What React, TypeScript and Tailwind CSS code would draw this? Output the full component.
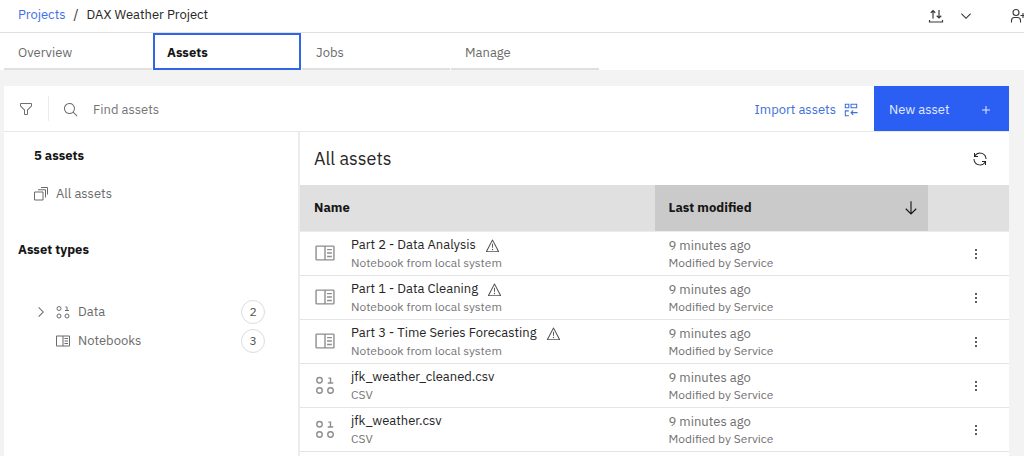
import type { ReactNode } from 'react';

const assets = [
  { name: 'Part 2 - Data Analysis', kind: 'Notebook from local system', notebook: true },
  { name: 'Part 1 - Data Cleaning', kind: 'Notebook from local system', notebook: true },
  { name: 'Part 3 - Time Series Forecasting', kind: 'Notebook from local system', notebook: true },
  { name: 'jfk_weather_cleaned.csv', kind: 'CSV', notebook: false },
  { name: 'jfk_weather.csv', kind: 'CSV', notebook: false },
];

const tabs = ['Overview', 'Assets', 'Jobs', 'Manage'];

export default function App() {
  return (
    <div className="flex min-h-screen flex-col overflow-hidden bg-[#f3f3f3] font-['IBM_Plex_Sans','Noto_Sans',sans-serif] text-[13px] leading-5 text-[#262626]">
      <header className="flex h-[33px] items-center justify-between border-b border-[#e0e0e0] bg-white pl-[18px]">
        <nav aria-label="Breadcrumb" className="flex items-center gap-2 pb-0.5">
          <a href="#projects" className="text-[#3d70e8]">Projects</a>
          <span>/</span>
          <span>DAX Weather Project</span>
        </nav>
        <div className="-mr-0.5 flex shrink-0 items-center text-[#393939]">
          <button aria-label="Import or export" className="mr-[14px]"><Icon className="size-4"><Transfer /></Icon></button>
          <button aria-label="More actions" className="mr-9"><Icon className="size-4"><path d="M16 22 6 12l1.4-1.4 8.6 8.6 8.6-8.6L26 12z" /></Icon></button>
          <button aria-label="Add collaborators"><Icon className="size-4"><UserAdd /></Icon></button>
        </div>
      </header>

      <nav aria-label="Project" className="flex gap-px bg-white pl-1">
        {tabs.map((tab) => (
          <a
            key={tab}
            href={`#${tab.toLowerCase()}`}
            className={`flex h-[37px] w-37 items-center ${tab === 'Assets' ? 'border-2 border-[#2f66e6] px-3 pt-0.5 font-bold text-[#161616]' : 'border-b-2 border-[#e0e0e0] px-[14px] pt-1 text-[#6b6b6b]'}`}
          >
            {tab}
          </a>
        ))}
      </nav>

      <main className="mt-4 mr-[15px] ml-1 flex grow flex-col bg-white">
        <div className="flex h-[46px] border-b border-[#e8e8e8]">
          <button aria-label="Filter" className="px-[14px] text-[#6f6f6f]"><Icon className="size-4"><Filter /></Icon></button>
          <div className="my-2.5 border-l border-[#ececec]" />
          <label className="flex grow items-center gap-[14px] pt-0.5 pl-[14px] text-[#6f6f6f]">
            <Icon className="size-4">
              <path d="m29 27.6-7.6-7.6a11 11 0 1 0-1.4 1.4l7.6 7.6zM4 13a9 9 0 1 1 9 9 9 9 0 0 1-9-9z" />
            </Icon>
            <input type="text" aria-label="Find assets" placeholder="Find assets" className="min-w-0 grow outline-none placeholder:text-[#757575]" />
          </label>
          <button className="flex items-center gap-2 px-4 pt-0.5 text-[#3d70d8]">
            Import assets
            <Icon className="size-[14px]"><ImportAssets /></Icon>
          </button>
          <button className="flex w-[135px] items-center justify-between bg-[#2b5ff3] pt-0.5 pr-[15px] pl-[15px] text-[#e3eaff]">
            New asset
            <Icon className="size-4"><path d="M17 15V8h-2v7H8v2h7v7h2v-7h7v-2z" /></Icon>
          </button>
        </div>

        <div className="flex grow">
          <aside className="w-[296px] shrink-0 border-r-2 border-[#ececec] text-[#6b6b6b]">
            <h2 className="mt-[14px] ml-[30px] font-bold text-[#161616]">5 assets</h2>
            <a href="#all" className="mt-[18px] ml-[29px] flex items-center gap-[7px]">
              <Icon className="size-4"><Stack /></Icon>
              All assets
            </a>
            <h2 className="mt-9 ml-[14px] font-bold text-[#161616]">Asset types</h2>
            <ul className="mt-[37px] mr-[33px] ml-[29px]">
              <li className="flex h-[29px] items-center">
                <button aria-label="Expand data" className="w-[22px]">
                  <Icon className="size-4"><path d="M22 16 12 26l-1.4-1.4 8.6-8.6-8.6-8.6L12 6z" /></Icon>
                </button>
                <Icon className="size-4"><Data /></Icon>
                <a href="#data" className="ml-[7px] grow">Data</a>
                <Count value={2} />
              </li>
              <li className="flex h-[29px] items-center pl-[22px]">
                <Icon className="size-4"><Notebook /></Icon>
                <a href="#notebooks" className="ml-[7px] grow">Notebooks</a>
                <Count value={3} />
              </li>
            </ul>
          </aside>

          <section className="min-w-0 grow">
            <div className="flex h-[53px] items-center justify-between pr-[21px] pl-[14px]">
              <h1 className="text-lg">All assets</h1>
              <button aria-label="Refresh"><Icon className="size-4"><Renew /></Icon></button>
            </div>
            <table className="w-full table-fixed text-left">
              <thead>
                <tr className="h-[46px] border-b border-[#ececec] bg-[#e0e0e0] text-[#161616]">
                  <th className="w-1/2 pl-[14px]">Name</th>
                  <th aria-sort="descending" className="bg-[#cacaca] pr-2 pl-[14px]">
                    <button className="flex w-full items-center justify-between">
                      Last modified
                      <Icon className="size-[18px]"><path d="M24.6 16.6 17 24.2V4h-2v20.2l-7.6-7.6L6 18l10 10 10-10z" /></Icon>
                    </button>
                  </th>
                  <th aria-label="Actions" className="w-[81px]" />
                </tr>
              </thead>
              <tbody>
                {assets.map((asset) => (
                  <tr key={asset.name} className="h-11 border-b border-[#e4e4e4]">
                    <td className="pl-[14px]">
                      <div className="flex items-center gap-[15px]">
                        <Icon className="size-[22px] text-[#8d8d8d]">{asset.notebook ? <Notebook /> : <Data />}</Icon>
                        <div className="whitespace-nowrap">
                          <div className="flex h-[19px] items-center gap-[9px]">
                            <a href="#asset">{asset.name}</a>
                            {asset.notebook && <Icon className="size-[15px] text-[#525252]"><Warning /></Icon>}
                          </div>
                          <div className="text-xs leading-4 text-[#757575]">{asset.kind}</div>
                        </div>
                      </div>
                    </td>
                    <td className="pl-[14px] whitespace-nowrap text-[#6f6f6f]">
                      <div className="leading-[19px]">9 minutes ago</div>
                      <div className="text-xs leading-4">Modified by Service</div>
                    </td>
                    <td className="text-center">
                      <button aria-label={`Actions for ${asset.name}`} className="mr-[-14px] align-middle text-[#262626]">
                        <Icon className="size-4"><Dots /></Icon>
                      </button>
                    </td>
                  </tr>
                ))}
              </tbody>
            </table>
          </section>
        </div>
      </main>
    </div>
  );
}

function Icon({ className, children }: { className: string; children: ReactNode }) {
  return (
    <svg viewBox="0 0 32 32" fill="currentColor" aria-hidden="true" className={`shrink-0 ${className}`}>
      {children}
    </svg>
  );
}

function Count({ value }: { value: number }) {
  return (
    <span className="flex size-6 items-center justify-center rounded-full border border-[#dcdcdc] text-xs text-[#525252]">
      {value}
    </span>
  );
}

function Dots() {
  return (
    <>
      <circle cx="16" cy="8" r="2" />
      <circle cx="16" cy="16" r="2" />
      <circle cx="16" cy="24" r="2" />
    </>
  );
}

function Filter() {
  return <path d="M18 28h-4a2 2 0 0 1-2-2v-7.6L4.6 11A2 2 0 0 1 4 9.6V6a2 2 0 0 1 2-2h20a2 2 0 0 1 2 2v3.6a2 2 0 0 1-.6 1.4L20 18.4V26a2 2 0 0 1-2 2zM6 6v3.6l8 8V26h4v-8.4l8-8V6z" />;
}

function Notebook() {
  return (
    <>
      <path d="M19 10h7v2h-7zM19 15h7v2h-7zM19 20h7v2h-7z" />
      <path d="M28 5H4a2 2 0 0 0-2 2v18a2 2 0 0 0 2 2h24a2 2 0 0 0 2-2V7a2 2 0 0 0-2-2zM4 7h11v18H4zm13 18V7h11v18z" />
    </>
  );
}

function Data() {
  return (
    <g fill="none" stroke="currentColor" strokeWidth="2">
      <circle cx="8" cy="9" r="4" />
      <circle cx="8" cy="24" r="4" />
      <circle cx="24" cy="24" r="4" />
      <path d="M21 6h3v7M20 13h8" />
    </g>
  );
}

function Warning() {
  return (
    <>
      <path d="M15 12h2v9h-2z" />
      <circle cx="16" cy="24.5" r="1.5" />
      <path d="M29 30H3a1 1 0 0 1-.9-1.5l13-25a1 1 0 0 1 1.8 0l13 25A1 1 0 0 1 29 30zM4.7 28h22.6L16 6.2z" />
    </>
  );
}

function Renew() {
  return <path d="M12 10H6.8A11 11 0 0 1 27 16h2A13 13 0 0 0 6 7.7V4H4v8h8zM20 22h5.2A11 11 0 0 1 5 16H3a13 13 0 0 0 23 8.3V28h2v-8h-8z" />;
}

function Stack() {
  return (
    <g fill="none" stroke="currentColor" strokeWidth="2">
      <path d="M3 12h17v16H3zM10 7.5h15V23M16 3h13v14" />
    </g>
  );
}

function Transfer() {
  return (
    <g fill="none" stroke="currentColor" strokeWidth="2.4">
      <path d="M10 21V5M5.5 9.5 10 5l4.5 4.5M22 4v16M17.5 15.5 22 20l4.5-4.5M3 24v4h26v-4" />
    </g>
  );
}

function UserAdd() {
  return (
    <g fill="none" stroke="currentColor" strokeWidth="2.2">
      <circle cx="12" cy="9" r="6" />
      <path d="M3 29v-4a6 6 0 0 1 6-6h6a6 6 0 0 1 6 6v4M21 15h11M26 10v10" />
    </g>
  );
}

function ImportAssets() {
  return (
    <g fill="none" stroke="currentColor" strokeWidth="2.4">
      <path d="M3 3h8v8H3zM16 3h13v8H16zM11 18H3v11h8M31 22H16M21 17l-5 5 5 5" />
    </g>
  );
}
